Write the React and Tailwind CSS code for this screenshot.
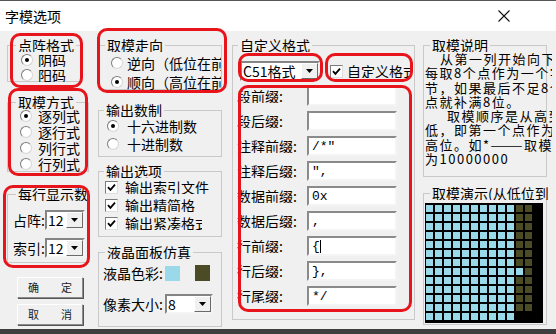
import React from 'react';

const Group = ({ title, className = '', legendClass = '', children }) => (
    <fieldset className={`min-w-0 border border-[#c9c9c9] ${className}`}>
        <legend className={`px-[2px] text-[14px] leading-[14px] whitespace-nowrap overflow-hidden ${legendClass}`}>{title}</legend>
        {children}
    </fieldset>
);

const Radio = ({ checked, label, className = '' }) => (
    <div className={`flex items-center whitespace-nowrap overflow-hidden ${className}`}>
        <span className="flex items-center justify-center shrink-0 w-[12px] h-[12px] rounded-full bg-white border border-t-[#7c7c7c] border-l-[#7c7c7c] border-r-[#d6d6d6] border-b-[#d6d6d6]">
            {checked && <span className="w-[4px] h-[4px] rounded-full bg-black" />}
        </span>
        <span className="text-[14px] leading-[14px]">{label}</span>
    </div>
);

const Check = ({ label, className = '', textClass = '' }) => (
    <div className={`flex items-center whitespace-nowrap ${className}`}>
        <span className="flex items-center justify-center shrink-0 w-[13px] h-[13px] bg-white border border-t-[#7c7c7c] border-l-[#7c7c7c] border-r-[#dedede] border-b-[#dedede]">
            <svg width="9" height="9" viewBox="0 0 9 9">
                <path d="M1 4.2 L3.4 6.8 L8 1.6" fill="none" stroke="#000" strokeWidth="1.8" />
            </svg>
        </span>
        <span className={`text-[14px] leading-[14px] overflow-hidden ${textClass}`}>{label}</span>
    </div>
);

const Combo = ({ value, className = '', btnClass = 'w-[17px]' }) => (
    <div className={`flex bg-white border-2 border-t-[#858585] border-l-[#858585] border-r-[#f4f4f4] border-b-[#f4f4f4] ${className}`}>
        <div className="flex-1 flex items-center pl-[1px] text-[14px] leading-[14px] overflow-hidden whitespace-nowrap">{value}</div>
        <div className={`flex items-center justify-center bg-[#f0f0f0] border border-t-white border-l-white border-r-[#6a6a6a] border-b-[#6a6a6a] ${btnClass}`}>
            <svg width="7" height="4" viewBox="0 0 7 4">
                <path d="M0 0h7L3.5 4z" fill="#000" />
            </svg>
        </div>
    </div>
);

const Field = ({ label, value, caret }) => (
    <div className="flex items-center h-[20px]">
        <span className="w-[74px] pl-[4px] text-[14px] leading-[14px] whitespace-nowrap overflow-hidden">{label}</span>
        <div className="w-[90px] h-[20px] flex items-center pl-[3px] bg-white border-2 border-t-[#8a8a8a] border-l-[#8a8a8a] border-r-[#f4f4f4] border-b-[#f4f4f4] text-[13px] leading-[13px] font-['Liberation_Mono',monospace]">
            {value}
            {caret && <span className="inline-block w-px h-[13px] bg-black" />}
        </div>
    </div>
);

const Button = ({ a, b, className = '' }) => (
    <div className={`ml-[10px] w-[66px] flex items-center justify-between px-[10px] text-[11px] leading-[11px] text-[#222] bg-[#f0f0f0] border border-t-white border-l-white border-r-[#8c8c8c] border-b-[#8c8c8c] shadow-[1px_1px_0_#555] ${className}`}>
        <span>{a}</span>
        <span>{b}</span>
    </div>
);

const Mark = ({ className }) => (
    <div className={`absolute border-[3px] border-[#e8141c] rounded-[10px] pointer-events-none ${className}`} />
);

const fields = [
    ['段前缀:', ''],
    ['段后缀:', ''],
    ['注释前缀:', '/*"'],
    ['注释后缀:', '",'],
    ['数据前缀:', '0x'],
    ['数据后缀:', ','],
    ['行前缀:', '{', true],
    ['行后缀:', '},'],
    ['行尾缀:', '*/'],
];

const notes = [
    ['pl-[15px]', '从第一列开始向下'],
    ['', '每取8个点作为一个字'],
    ['', '节，如果最后不足8个'],
    ['', '点就补满8位。'],
    ['pl-[22px]', '取模顺序是从高到'],
    ['', '低，即第一个点作为最'],
    ['', '高位。如*———取模'],
    ['', '为10000000'],
];

const cellColor = (r, c) => {
    if (r === 12 && c >= 10) return 'bg-black';
    if (r === 7 && c === 10) return 'bg-[#99d9ea]';
    return c < 10 ? 'bg-[#99d9ea]' : 'bg-[#4b4b25]';
};

export default function App() {
    const cells = [];
    for (let r = 0; r < 13; r++) {
        for (let c = 0; c < 12; c++) {
            cells.push(<div key={`${r}-${c}`} className={`w-[7px] h-[7px] ${cellColor(r, c)}`} />);
        }
    }

    return (
        <div className="relative w-[556px] h-[334px] overflow-hidden bg-[#f0f0f0] text-black font-['Noto_Sans_CJK_SC','Noto_Sans',sans-serif]">
            {/* title bar */}
            <div className="h-[31px] bg-white flex items-center justify-between border-t border-[#555]">
                <span className="pl-[5px] text-[14px] leading-[14px]">字模选项</span>
                <svg className="mr-[46px]" width="12" height="12" viewBox="0 0 12 12">
                    <path d="M0.5 0.5L11.5 11.5M11.5 0.5L0.5 11.5" stroke="#111" strokeWidth="1.1" />
                </svg>
            </div>

            <div className="flex items-start h-[298px]">
                {/* left column */}
                <div className="ml-[7px] w-[83px] flex flex-col">
                    <Group title="点阵格式" className="mt-[7px] w-[74px] h-[44px]" legendClass="ml-[8px]">
                        <Radio checked label="阴码" className="h-[15px] pl-[13px] gap-[5px]" />
                        <Radio label="阳码" className="h-[15px] pl-[13px] gap-[5px]" />
                    </Group>
                    <Group title="取模方式" className="mt-[13px] w-[82px] h-[77px]" legendClass="ml-[8px]">
                        <div className="-mt-[1px]">
                            <Radio checked label="逐列式" className="h-[16px] pl-[12px] gap-[6px]" />
                            <Radio label="逐行式" className="h-[16px] pl-[12px] gap-[6px]" />
                            <Radio label="列行式" className="h-[16px] pl-[12px] gap-[6px]" />
                            <Radio label="行列式" className="h-[16px] pl-[12px] gap-[6px]" />
                        </div>
                    </Group>
                    <Group title="每行显示数据" className="mt-[15px] w-[82px] h-[76px]" legendClass="ml-[8px] max-w-[73px]">
                        <div className="flex items-center mt-[9px] h-[20px] pl-[5px]">
                            <span className="text-[14px] leading-[14px] w-[32px] whitespace-nowrap">占阵:</span>
                            <Combo value="12" className="w-[40px] h-[20px]" />
                        </div>
                        <div className="flex items-center mt-[8px] h-[20px] pl-[5px]">
                            <span className="text-[14px] leading-[14px] w-[32px] whitespace-nowrap">索引:</span>
                            <Combo value="12" className="w-[40px] h-[20px]" />
                        </div>
                    </Group>
                    <Button a="确" b="定" className="mt-[14px] h-[21px]" />
                    <Button a="取" b="消" className="mt-[6px] h-[21px]" />
                </div>

                {/* middle column */}
                <div className="ml-[8px] w-[124px] flex flex-col">
                    <Group title="取模走向" className="mt-[7px] h-[52px]" legendClass="ml-[6px]">
                        <div className="mt-[1px]">
                            <Radio label="逆向（低位在前）" className="h-[19px] pl-[12px] gap-[4px]" />
                            <Radio checked label="顺向（高位在前）" className="h-[19px] pl-[12px] gap-[4px]" />
                        </div>
                    </Group>
                    <Group title="输出数制" className="mt-[13px] h-[54px]" legendClass="ml-[5px]">
                        <Radio checked label="十六进制数" className="h-[18px] pl-[8px] gap-[8px]" />
                        <Radio label="十进制数" className="h-[18px] pl-[8px] gap-[8px]" />
                    </Group>
                    <Group title="输出选项" className="mt-[7px] h-[73px]" legendClass="ml-[5px]">
                        <Check label="输出索引文件" className="h-[18px] pl-[6px] gap-[7px]" />
                        <Check label="输出精简格" className="h-[18px] pl-[6px] gap-[7px]" />
                        <Check label="输出紧凑格式" className="h-[18px] pl-[6px] gap-[7px]" textClass="w-[77px]" />
                    </Group>
                    <Group title="液晶面板仿真" className="mt-[8px] h-[82px]" legendClass="ml-[6px]">
                        <div className="flex items-center mt-[6px] h-[16px] pl-[4px]">
                            <span className="w-[62px] text-[14px] leading-[14px] whitespace-nowrap">液晶色彩:</span>
                            <span className="w-[15px] h-[15px] bg-[#99d9ea]" />
                            <span className="ml-[15px] w-[15px] h-[16px] bg-[#4b4b25]" />
                        </div>
                        <div className="flex items-center mt-[13px] h-[20px] pl-[4px]">
                            <span className="w-[62px] text-[14px] leading-[14px] whitespace-nowrap">像素大小:</span>
                            <Combo value="8" className="w-[48px] h-[20px]" />
                        </div>
                    </Group>
                </div>

                {/* custom format */}
                <div className="ml-[10px] w-[183px]">
                    <Group title="自定义格式" className="mt-[7px] h-[282px]" legendClass="ml-[5px]">
                        <div className="flex items-center mt-[9px] h-[20px] pl-[7px]">
                            <Combo value="C51格式" className="w-[80px] h-[20px]" />
                            <Check label="自定义格式" className="ml-[10px] gap-[4px]" textClass="w-[63px]" />
                        </div>
                        <div className="mt-[5px] flex flex-col gap-[5px]">
                            {fields.map(([label, value, caret]) => (
                                <Field key={label} label={label} value={value} caret={caret} />
                            ))}
                        </div>
                    </Group>
                </div>

                {/* right column */}
                <div className="ml-[8px] w-[124px] flex flex-col">
                    <Group title="取模说明" className="mt-[7px] h-[139px]" legendClass="ml-[6px]">
                        <div className="ml-[1px] w-[127px] overflow-hidden text-[13px] leading-[14.3px] tracking-[1.5px] whitespace-nowrap">
                            {notes.map(([pad, line], i) => (
                                <div key={i} className={pad}>{line}</div>
                            ))}
                        </div>
                    </Group>
                    <Group title="取模演示(从低位到高位)" className="mt-[9px] h-[139px]" legendClass="ml-[6px] max-w-[119px]">
                        <div className="mt-[3px] ml-[1px] w-[118px] h-[120px] overflow-hidden bg-black pt-[2px] pl-[1px]">
                            <div className="grid grid-cols-[repeat(12,7px)] gap-[2px]">
                                {cells}
                            </div>
                        </div>
                    </Group>
                </div>
            </div>

            <div className="h-[5px] bg-[#3f3f3f]" />

            {/* red annotation outlines */}
            <Mark className="left-[10px] top-[33px] w-[73px] h-[55px]" />
            <Mark className="left-[8px] top-[88px] w-[80px] h-[88px]" />
            <Mark className="left-[3px] top-[185px] w-[87px] h-[83px]" />
            <Mark className="left-[97px] top-[28px] w-[130px] h-[65px]" />
            <Mark className="left-[238px] top-[53px] w-[85px] h-[29px]" />
            <Mark className="left-[325px] top-[53px] w-[88px] h-[29px]" />
            <Mark className="left-[238px] top-[85px] w-[174px] h-[227px]" />
        </div>
    );
}
